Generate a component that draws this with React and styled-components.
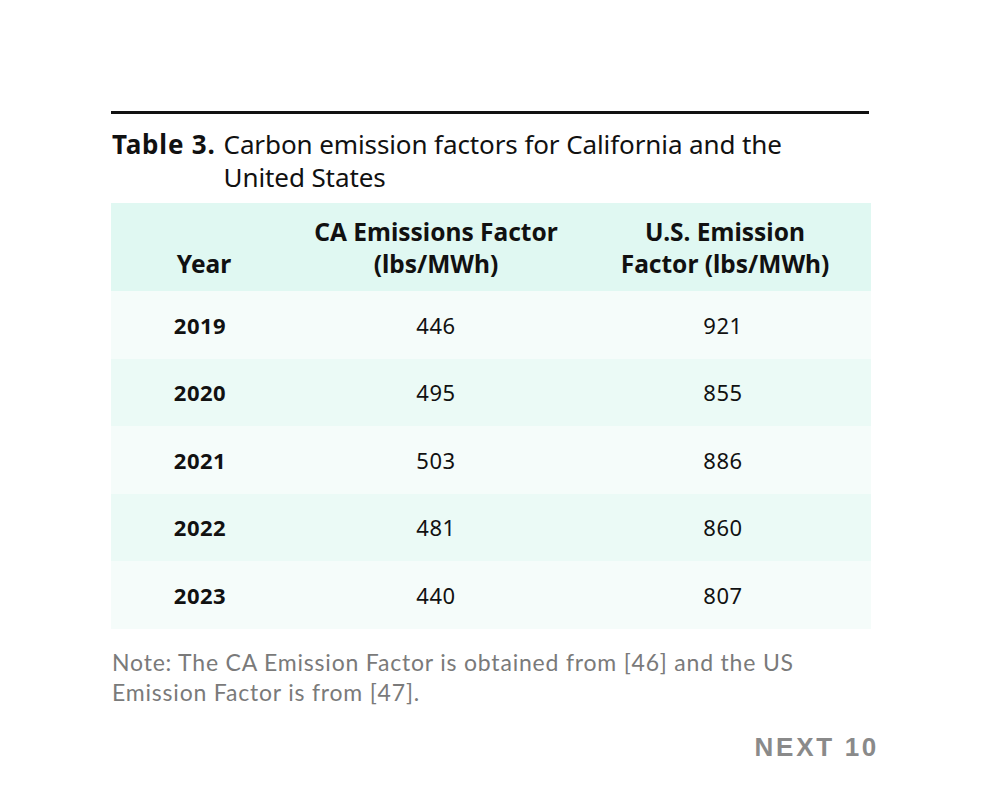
import { createGlobalStyle } from "styled-components";
import styled from "styled-components";

const GlobalStyle = createGlobalStyle`
  html, body {
    margin: 0;
    padding: 0;
    background: #ffffff;
  }
`;

const Page = styled.div`
  width: 984px;
  height: 812px;
  box-sizing: border-box;
  padding: 111px 0 0 111px;
  font-family: "Noto Sans", sans-serif;
  color: #111;
`;

const Frame = styled.div`
  width: 760px;
  display: flex;
  flex-direction: column;
`;

const Rule = styled.div`
  width: 758px;
  height: 3px;
  background: #111;
`;

const Caption = styled.div`
  display: flex;
  gap: 8px;
  margin: 14px 0 9px 1px;
  font-size: 26px;
  line-height: 33px;
`;

const CaptionLabel = styled.span`
  font-weight: 700;
  letter-spacing: 0.8px;
  white-space: nowrap;
`;

const CaptionText = styled.span`
  width: 600px;
  letter-spacing: -0.1px;
`;

const Grid = styled.div`
  display: grid;
  grid-template-columns: 182px 286px 292px;
`;

const Row = styled.div`
  display: contents;
`;

const Cell = styled.div`
  height: ${(p) => (p.$head ? "88px" : "67.5px")};
  box-sizing: border-box;
  display: flex;
  align-items: ${(p) => (p.$head ? "flex-end" : "center")};
  justify-content: center;
  text-align: center;
  padding-bottom: ${(p) => (p.$head ? "11px" : "0")};
  background: ${(p) => p.$bg};
  font-size: ${(p) => (p.$head ? "24.5px" : "22px")};
  line-height: 32px;
  letter-spacing: ${(p) => (p.$head ? "0" : "0.5px")};
  font-weight: ${(p) => (p.$bold ? 700 : 400)};
  padding-left: ${(p) => (p.$shift ? "4px" : "0")};
  padding-right: ${(p) => (p.$lean ? "4px" : "0")};
`;

const Note = styled.p`
  margin: 18px 0 0 1px;
  font-family: Lato, sans-serif;
  font-size: 23px;
  line-height: 30px;
  color: #7a7a7a;
  letter-spacing: 0.8px;
`;

const Brand = styled.div`
  align-self: flex-end;
  margin: 25px -8px 0 0;
  font-family: "Liberation Sans", sans-serif;
  font-weight: 700;
  font-size: 26px;
  letter-spacing: 2.7px;
  color: #8a8a8a;
`;

const rows = [
  ["2019", "446", "921"],
  ["2020", "495", "855"],
  ["2021", "503", "886"],
  ["2022", "481", "860"],
  ["2023", "440", "807"],
];

export default function App() {
  return (
    <Page>
      <GlobalStyle />
      <Frame>
        <Rule />
        <Caption>
          <CaptionLabel>Table 3.</CaptionLabel>
          <CaptionText>
            Carbon emission factors for California and the
            <br />
            United States
          </CaptionText>
        </Caption>
        <Grid>
          <Row>
            <Cell $head $bold $bg="#e0f8f2" $shift>Year</Cell>
            <Cell $head $bold $bg="#e0f8f2">CA Emissions Factor<br />(lbs/MWh)</Cell>
            <Cell $head $bold $bg="#e0f8f2">U.S. Emission<br />Factor (lbs/MWh)</Cell>
          </Row>
          {rows.map((r, i) => {
            const bg = i % 2 === 0 ? "#f5fcfa" : "#ebfaf6";
            return (
              <Row key={r[0]}>
                <Cell $bold $bg={bg} $lean>{r[0]}</Cell>
                <Cell $bg={bg}>{r[1]}</Cell>
                <Cell $bg={bg} $lean>{r[2]}</Cell>
              </Row>
            );
          })}
        </Grid>
        <Note>
          Note: The CA Emission Factor is obtained from [46] and the US
          <br />
          Emission Factor is from [47].
        </Note>
        <Brand>NEXT 10</Brand>
      </Frame>
    </Page>
  );
}
